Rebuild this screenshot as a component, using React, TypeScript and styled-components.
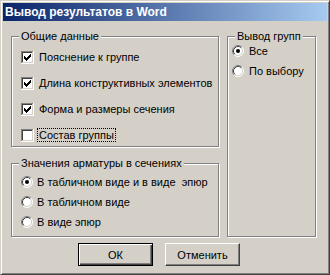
import React from "react";
import styled, { createGlobalStyle } from "styled-components";

const GlobalStyle = createGlobalStyle`
  html, body {
    margin: 0;
    padding: 0;
    background: #d4d0c8;
  }
  body {
    font-family: "Liberation Sans", Arial, sans-serif;
    font-size: 11px;
    color: #000;
  }
`;

const Window = styled.div`
  width: 330px;
  height: 275px;
  box-sizing: border-box;
  display: flex;
  flex-direction: column;
  padding: 2px;
  background: #d4d0c8;
  border: 1px solid;
  border-color: #d4d0c8 #404040 #404040 #d4d0c8;
  box-shadow: inset 1px 1px #fff, inset -1px -1px #808080;
`;

const TitleBar = styled.div`
  display: flex;
  align-items: center;
  height: 18px;
  padding-left: 2px;
  background: linear-gradient(to right, #0a246a, #a6caf0);
  color: #fff;
  font-weight: bold;
  font-size: 12px;
`;

const Body = styled.div`
  display: flex;
  flex-direction: column;
  padding: 15px 10px 0 8px;
`;

const TopRow = styled.div`
  display: flex;
  align-items: flex-start;
  gap: 8px;
`;

const LeftCol = styled.div`
  display: flex;
  flex-direction: column;
  gap: 16px;
`;

const Group = styled.div<{ $w: number; $h: number; $pt: number; $pl?: number; $gap: number }>`
  position: relative;
  box-sizing: border-box;
  width: ${(p) => p.$w}px;
  height: ${(p) => p.$h}px;
  display: flex;
  flex-direction: column;
  gap: ${(p) => p.$gap}px;
  padding: ${(p) => p.$pt}px 0 0 ${(p) => p.$pl ?? 9}px;
  border: 1px solid #808080;
  box-shadow: inset 1px 1px #fff, 1px 1px #fff;
`;

const Legend = styled.span`
  position: absolute;
  top: -7px;
  left: 7px;
  padding: 0 2px;
  line-height: 13px;
  background: #d4d0c8;
`;

const Row = styled.div<{ $gap: number }>`
  display: flex;
  align-items: center;
  gap: ${(p) => p.$gap}px;
  height: 14px;
`;

const Label = styled.span<{ $focused?: boolean }>`
  padding: 0 1px;
  line-height: 12px;
  border: 1px dotted ${(p) => (p.$focused ? "#000" : "transparent")};
  white-space: pre;
`;

const BoxSvg = styled.svg`
  display: block;
  flex: none;
`;

const ButtonRow = styled.div`
  display: flex;
  gap: 12px;
  margin-top: 6px;
  padding-left: 67px;
`;

const Button = styled.div<{ $default?: boolean }>`
  box-sizing: border-box;
  width: 75px;
  height: 23px;
  display: flex;
  align-items: center;
  justify-content: center;
  background: #d4d0c8;
  border: 1px solid;
  border-color: ${(p) => (p.$default ? "#000" : "#fff #404040 #404040 #fff")};
  box-shadow: ${(p) =>
    p.$default
      ? "inset 1px 1px #fff, inset -1px -1px #404040, inset -2px -2px #808080"
      : "inset -1px -1px #808080"};
`;

const Checkbox = ({ checked }: { checked?: boolean }) => (
  <BoxSvg width="13" height="13" viewBox="0 0 13 13" shapeRendering="crispEdges">
    <rect x="0" y="0" width="13" height="13" fill="#fff" />
    <rect x="0" y="0" width="12" height="1" fill="#808080" />
    <rect x="0" y="0" width="1" height="12" fill="#808080" />
    <rect x="1" y="1" width="10" height="1" fill="#404040" />
    <rect x="1" y="1" width="1" height="10" fill="#404040" />
    <rect x="1" y="11" width="11" height="1" fill="#d4d0c8" />
    <rect x="11" y="1" width="1" height="11" fill="#d4d0c8" />
    {checked && (
      <g fill="#000">
        <rect x="9" y="3" width="1" height="1" />
        <rect x="8" y="4" width="2" height="1" />
        <rect x="3" y="5" width="1" height="1" />
        <rect x="7" y="5" width="3" height="1" />
        <rect x="3" y="6" width="2" height="1" />
        <rect x="6" y="6" width="3" height="1" />
        <rect x="3" y="7" width="5" height="1" />
        <rect x="4" y="8" width="3" height="1" />
        <rect x="5" y="9" width="1" height="1" />
      </g>
    )}
  </BoxSvg>
);

const Radio = ({ checked }: { checked?: boolean }) => (
  <BoxSvg width="12" height="12" viewBox="0 0 12 12">
    <circle cx="6" cy="6" r="5" fill="#fff" />
    <path d="M2.11 9.89 A5.5 5.5 0 0 1 9.89 2.11" fill="none" stroke="#808080" />
    <path d="M9.89 2.11 A5.5 5.5 0 0 1 2.11 9.89" fill="none" stroke="#fff" />
    <path d="M2.82 9.18 A4.5 4.5 0 0 1 9.18 2.82" fill="none" stroke="#404040" />
    <path d="M9.18 2.82 A4.5 4.5 0 0 1 2.82 9.18" fill="none" stroke="#d4d0c8" />
    {checked && <circle cx="6" cy="6" r="2" fill="#000" />}
  </BoxSvg>
);

const checks = [
  { text: "Пояснение к группе", checked: true },
  { text: "Длина конструктивных элементов", checked: true },
  { text: "Форма и размеры сечения", checked: true },
  { text: "Состав группы", checked: false, focused: true },
];

const views = [
  { text: "В табличном виде и в виде  эпюр", checked: true },
  { text: "В табличном виде", checked: false },
  { text: "В виде эпюр", checked: false },
];

const groups = [
  { text: "Все", checked: true },
  { text: "По выбору", checked: false },
];

export default function App() {
  return (
    <>
      <GlobalStyle />
      <Window>
        <TitleBar>Вывод результатов в Word</TitleBar>
        <Body>
          <TopRow>
            <LeftCol>
              <Group $w={208} $h={111} $pt={13} $gap={12}>
                <Legend>Общие данные</Legend>
                {checks.map((c) => (
                  <Row key={c.text} $gap={3}>
                    <Checkbox checked={c.checked} />
                    <Label $focused={c.focused}>{c.text}</Label>
                  </Row>
                ))}
              </Group>
              <Group $w={208} $h={74} $pt={11} $gap={6}>
                <Legend>Значения арматуры в сечениях</Legend>
                {views.map((v) => (
                  <Row key={v.text} $gap={2}>
                    <Radio checked={v.checked} />
                    <Label>{v.text}</Label>
                  </Row>
                ))}
              </Group>
            </LeftCol>
            <Group $w={89} $h={201} $pt={7} $pl={4} $gap={6}>
              <Legend>Вывод групп</Legend>
              {groups.map((g) => (
                <Row key={g.text} $gap={3}>
                  <Radio checked={g.checked} />
                  <Label>{g.text}</Label>
                </Row>
              ))}
            </Group>
          </TopRow>
          <ButtonRow>
            <Button $default>ОК</Button>
            <Button>Отменить</Button>
          </ButtonRow>
        </Body>
      </Window>
    </>
  );
}
